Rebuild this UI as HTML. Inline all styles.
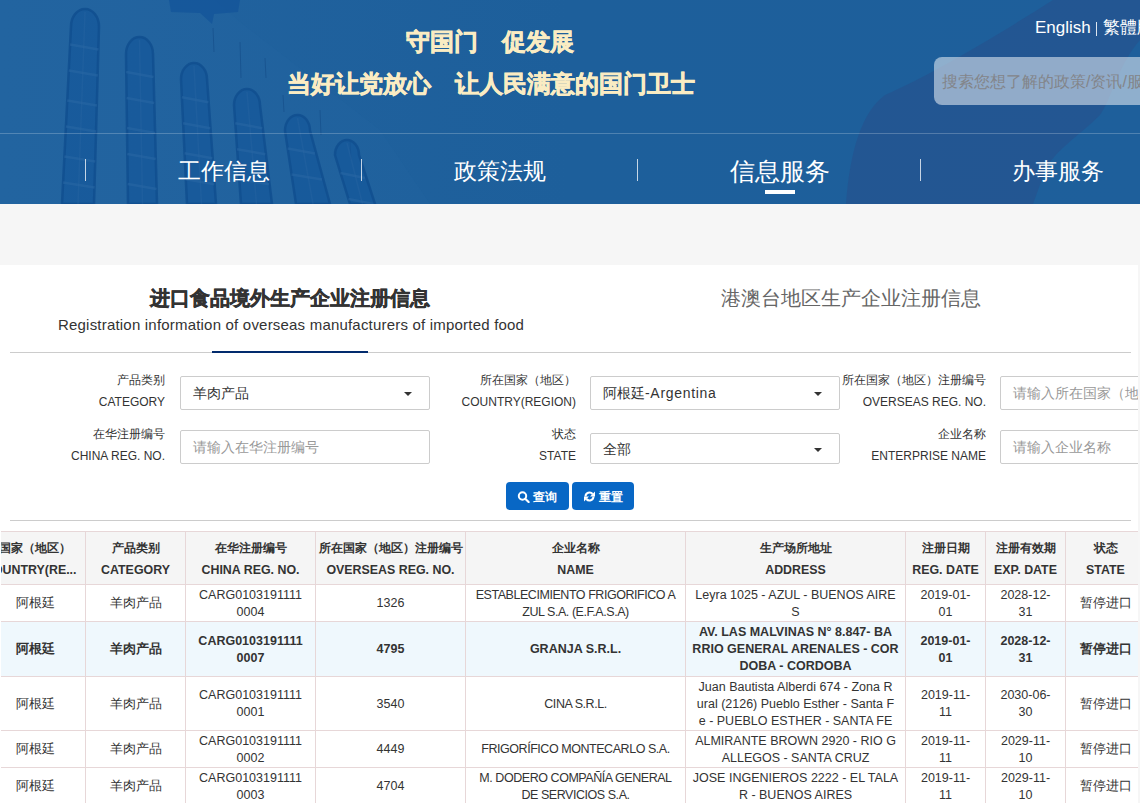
<!DOCTYPE html>
<html><head><meta charset="utf-8">
<style>
*{margin:0;padding:0;box-sizing:border-box}
html,body{width:1140px;height:803px;overflow:hidden;background:#f6f6f6;font-family:"Liberation Sans",sans-serif;color:#333}
.abs{position:absolute;white-space:nowrap}
#hdr{position:absolute;left:0;top:0;width:1140px;height:204px;background:#1e609b;overflow:hidden}
.slogan{color:#faecc3;font-weight:bold;font-size:24px;line-height:24px;-webkit-text-stroke:.6px #faecc3}
.navsep{position:absolute;top:159px;width:1px;height:22px;background:rgba(255,255,255,.75)}
.nav{position:absolute;top:158px;color:#fff;font-size:22.5px;line-height:28px;text-align:center;width:200px}
#clip{position:absolute;left:0;top:0;width:1138px;height:803px;overflow:hidden}
#main{position:absolute;left:0;top:265px;width:1138px;height:538px;background:#fff}
.lbl{position:absolute;text-align:right;font-size:12px;line-height:22px;color:#333;width:200px}
.box{position:absolute;width:250px;height:34px;border:1px solid #ccc;border-radius:2px;background:#fff;font-size:14px;line-height:32px;padding-left:12px;color:#333;white-space:nowrap;overflow:hidden}
.ph{color:#999}
.caret{position:absolute;right:17px;top:15px;width:0;height:0;border-left:4px solid transparent;border-right:4px solid transparent;border-top:4px solid #333}
.btn{position:absolute;top:482px;height:28px;background:#0867c5;border-radius:4px;color:#fff;font-weight:bold;font-size:12px;line-height:28px}
.btxt{top:1px;line-height:28px}
#tw{position:absolute;left:1px;top:531px;width:1137px;height:272px;overflow:hidden;background:#fff}
#tb{position:absolute;left:-15px;top:0;border-collapse:separate;border-spacing:0;table-layout:fixed;width:1160px;border-top:1px solid #e7d7d8;font-size:12.5px;color:#333}
#tb td,#tb th{border-right:1px solid #e7d7d8;border-bottom:1px solid #e7d7d8;text-align:center;vertical-align:middle;padding:1px 0 0;line-height:17px;white-space:nowrap;overflow:hidden}
#tb th{background:#f5f5f5;font-weight:bold;line-height:22px;height:53px;font-size:12.4px;padding:1px 0 0}
.c1h{position:relative;left:0;text-align:left}
#tb tr.hl td{background:#eff8fd;font-weight:bold}
#tb td:nth-child(5){letter-spacing:-.45px}
#tb tr.hl td:nth-child(5){letter-spacing:0}
</style></head><body>
<div id="hdr">
<svg class="abs" style="left:0;top:0" width="1140" height="204" viewBox="0 0 1140 204"><defs><linearGradient id="hg" x1="0" y1="0" x2="1" y2="0"><stop offset="0" stop-color="#22639f"/><stop offset=".5" stop-color="#1d5f9b"/><stop offset="1" stop-color="#1e5f9b"/></linearGradient></defs><rect width="1140" height="204" fill="url(#hg)"/><path d="M0,0 L215,0 L240,22 L380,130 L430,204 L0,204 Z" fill="#2a6aa5" fill-opacity=".15"/><path d="M169,0 L240,0 L238,12 L214,14 L212,24 L200,13 L171,12 Z" fill="#13549a" fill-opacity=".75"/><line x1="213" y1="28" x2="214" y2="52" stroke="#164f8a" stroke-opacity=".7" stroke-width="1"/><line x1="240" y1="42" x2="241" y2="78" stroke="#164f8a" stroke-opacity=".7" stroke-width="1"/><line x1="265" y1="58" x2="266" y2="78" stroke="#164f8a" stroke-opacity=".7" stroke-width="1"/><line x1="283" y1="95" x2="284" y2="112" stroke="#164f8a" stroke-opacity=".7" stroke-width="1"/><line x1="320" y1="110" x2="321" y2="135" stroke="#164f8a" stroke-opacity=".7" stroke-width="1"/><line x1="350" y1="140" x2="351" y2="160" stroke="#164f8a" stroke-opacity=".7" stroke-width="1"/><path d="M71,26.5 A14.0,17.5 0 0 1 99,26.5 L94,204 L62,204 Z" fill="#13559a" fill-opacity=".6" stroke="#114f8f" stroke-opacity=".85" stroke-width="2.5"/><line x1="70.1" y1="44.5" x2="98.5" y2="49.5" stroke="#2a68a4" stroke-opacity=".55" stroke-width="2.5"/><line x1="68.8" y1="70.5" x2="97.8" y2="75.5" stroke="#2a68a4" stroke-opacity=".55" stroke-width="2.5"/><line x1="67.2" y1="100.5" x2="96.9" y2="105.5" stroke="#2a68a4" stroke-opacity=".55" stroke-width="2.5"/><line x1="65.9" y1="126.5" x2="96.2" y2="131.5" stroke="#2a68a4" stroke-opacity=".55" stroke-width="2.5"/><line x1="64.4" y1="156.5" x2="95.3" y2="161.5" stroke="#2a68a4" stroke-opacity=".55" stroke-width="2.5"/><line x1="63.1" y1="182.5" x2="94.6" y2="187.5" stroke="#2a68a4" stroke-opacity=".55" stroke-width="2.5"/><line x1="85.0" y1="12" x2="78.0" y2="204" stroke="#2a68a4" stroke-opacity=".35" stroke-width="1.5"/><path d="M126,53.9 A13.5,16.9 0 0 1 153,53.9 L157,204 L128,204 Z" fill="#13559a" fill-opacity=".6" stroke="#114f8f" stroke-opacity=".85" stroke-width="2.5"/><line x1="126.2" y1="71.9" x2="153.5" y2="76.9" stroke="#2a68a4" stroke-opacity=".55" stroke-width="2.5"/><line x1="126.6" y1="97.9" x2="154.2" y2="102.9" stroke="#2a68a4" stroke-opacity=".55" stroke-width="2.5"/><line x1="127.0" y1="127.9" x2="155.0" y2="132.9" stroke="#2a68a4" stroke-opacity=".55" stroke-width="2.5"/><line x1="127.3" y1="153.9" x2="155.7" y2="158.9" stroke="#2a68a4" stroke-opacity=".55" stroke-width="2.5"/><line x1="127.7" y1="183.9" x2="156.5" y2="188.9" stroke="#2a68a4" stroke-opacity=".55" stroke-width="2.5"/><line x1="139.5" y1="40" x2="142.5" y2="204" stroke="#2a68a4" stroke-opacity=".35" stroke-width="1.5"/><path d="M181,79.2 A13.0,16.2 0 0 1 207,79.2 L216,204 L187,204 Z" fill="#13559a" fill-opacity=".6" stroke="#114f8f" stroke-opacity=".85" stroke-width="2.5"/><line x1="181.9" y1="97.2" x2="208.3" y2="102.2" stroke="#2a68a4" stroke-opacity=".55" stroke-width="2.5"/><line x1="183.1" y1="123.2" x2="210.2" y2="128.2" stroke="#2a68a4" stroke-opacity=".55" stroke-width="2.5"/><line x1="184.6" y1="153.2" x2="212.3" y2="158.2" stroke="#2a68a4" stroke-opacity=".55" stroke-width="2.5"/><line x1="185.8" y1="179.2" x2="214.2" y2="184.2" stroke="#2a68a4" stroke-opacity=".55" stroke-width="2.5"/><line x1="194.0" y1="66" x2="201.5" y2="204" stroke="#2a68a4" stroke-opacity=".35" stroke-width="1.5"/><path d="M234,105.2 A13.0,16.2 0 0 1 260,105.2 L272,204 L241,204 Z" fill="#13559a" fill-opacity=".6" stroke="#114f8f" stroke-opacity=".85" stroke-width="2.5"/><line x1="235.3" y1="123.2" x2="262.2" y2="128.2" stroke="#2a68a4" stroke-opacity=".55" stroke-width="2.5"/><line x1="237.1" y1="149.2" x2="265.3" y2="154.2" stroke="#2a68a4" stroke-opacity=".55" stroke-width="2.5"/><line x1="239.2" y1="179.2" x2="269.0" y2="184.2" stroke="#2a68a4" stroke-opacity=".55" stroke-width="2.5"/><line x1="247.0" y1="92" x2="256.5" y2="204" stroke="#2a68a4" stroke-opacity=".35" stroke-width="1.5"/><path d="M285,130.6 A12.5,15.6 0 0 1 310,130.6 L330,204 L296,204 Z" fill="#13559a" fill-opacity=".6" stroke="#114f8f" stroke-opacity=".85" stroke-width="2.5"/><line x1="287.7" y1="148.6" x2="314.9" y2="153.6" stroke="#2a68a4" stroke-opacity=".55" stroke-width="2.5"/><line x1="291.6" y1="174.6" x2="322.0" y2="179.6" stroke="#2a68a4" stroke-opacity=".55" stroke-width="2.5"/><line x1="297.5" y1="118" x2="313.0" y2="204" stroke="#2a68a4" stroke-opacity=".35" stroke-width="1.5"/><path d="M335,155.0 A12.0,15.0 0 0 1 359,155.0 L375,204 L350,204 Z" fill="#13559a" fill-opacity=".6" stroke="#114f8f" stroke-opacity=".85" stroke-width="2.5"/><line x1="340.5" y1="173.0" x2="364.9" y2="178.0" stroke="#2a68a4" stroke-opacity=".55" stroke-width="2.5"/><line x1="348.5" y1="199.0" x2="373.4" y2="204.0" stroke="#2a68a4" stroke-opacity=".55" stroke-width="2.5"/><line x1="347.0" y1="143" x2="362.5" y2="204" stroke="#2a68a4" stroke-opacity=".35" stroke-width="1.5"/><path d="M846,204 C850,150 862,112 885,95 C930,75 990,40 1053,0 L1140,0 L1140,40 C1118,65 1112,98 1100,115 C1080,135 1058,148 1046,168 L1033,204 Z" fill="#2b4a86" fill-opacity=".42"/></svg>
  <div class="abs slogan" style="left:406px;top:30px">守国门　促发展</div>
  <div class="abs slogan" style="left:287px;top:72px">当好让党放心　让人民满意的国门卫士</div>
  <div class="abs" style="left:1035px;top:17px;color:#fff;font-size:17px;line-height:22px">English</div><div class="abs" style="left:1096px;top:22px;width:1px;height:14px;background:rgba(255,255,255,.85)"></div><div class="abs" style="left:1103px;top:17px;color:#fff;font-size:17px;line-height:22px">繁體版</div>
  <div class="abs" style="left:934px;top:57px;width:260px;height:48px;border-radius:8px;background:rgba(255,255,255,.5);color:#838589;font-size:16px;line-height:50px;padding-left:8px">搜索您想了解的政策/资讯/服务</div>
  <div class="abs" style="left:0;top:133px;width:1140px;height:1px;background:rgba(255,255,255,.22)"></div>
  <div class="navsep" style="left:85px"></div>
  <div class="navsep" style="left:361px"></div>
  <div class="navsep" style="left:637px"></div>
  <div class="navsep" style="left:920px"></div>
  <div class="nav" style="left:124px">工作信息</div>
  <div class="nav" style="left:400px">政策法规</div>
  <div class="nav" style="left:680px;font-size:25px;top:157px">信息服务</div>
  <div class="nav" style="left:958px">办事服务</div>
  <div class="abs" style="left:765px;top:190px;width:30px;height:4px;background:#fff"></div>
</div>
<div id="clip">
<div id="main">
  <div class="abs" style="left:150px;top:20px;font-size:20px;font-weight:bold;line-height:26px;color:#333;-webkit-text-stroke:.45px #333">进口食品境外生产企业注册信息</div>
  <div class="abs" style="left:58px;top:50px;font-size:15px;line-height:20px;color:#333;letter-spacing:.2px">Registration information of overseas manufacturers of imported food</div>
  <div class="abs" style="left:721px;top:20px;font-size:20px;line-height:26px;color:#666">港澳台地区生产企业注册信息</div>
  <div class="abs" style="left:10px;top:87px;width:1121px;height:1px;background:#ccc"></div>
  <div class="abs" style="left:212px;top:86px;width:156px;height:2px;background:#022b6d"></div>
</div>
<div class="lbl" style="left:-35px;top:369px">产品类别<br>CATEGORY</div>
<div class="box" style="left:180px;top:376px">羊肉产品<i class="caret"></i></div>
<div class="lbl" style="left:376px;top:369px">所在国家（地区）<br>COUNTRY(REGION)</div>
<div class="box" style="left:590px;top:376px">阿根廷<span style="letter-spacing:.7px">-Argentina</span><i class="caret"></i></div>
<div class="lbl" style="left:786px;top:369px">所在国家（地区）注册编号<br>OVERSEAS REG. NO.</div>
<div class="box ph" style="left:1000px;top:376px">请输入所在国家（地区）注册编号</div>
<div class="lbl" style="left:-35px;top:423px">在华注册编号<br>CHINA REG. NO.</div>
<div class="box ph" style="left:180px;top:430px">请输入在华注册编号</div>
<div class="lbl" style="left:376px;top:423px">状态<br>STATE</div>
<div class="box" style="left:590px;top:433px;height:31px;line-height:31px">全部<i class="caret" style="top:14px"></i></div>
<div class="lbl" style="left:786px;top:423px">企业名称<br>ENTERPRISE NAME</div>
<div class="box ph" style="left:1000px;top:430px">请输入企业名称</div>
<div class="btn" style="left:506px;width:63px"><svg class="abs" style="left:11px;top:9px" width="13" height="12" viewBox="0 0 13 12"><circle cx="5.5" cy="5" r="3.7" fill="none" stroke="#fff" stroke-width="2"/><line x1="8.2" y1="7.8" x2="11.6" y2="11" stroke="#fff" stroke-width="2.2" stroke-linecap="round"/></svg><span class="abs btxt" style="left:27px">查询</span></div>
<div class="btn" style="left:572px;width:62px"><svg class="abs" style="left:12px;top:9px" width="11" height="11" viewBox="0 0 11 11"><path d="M1.5,5.5 A4,4 0 0 1 8.6,3" fill="none" stroke="#fff" stroke-width="2"/><path d="M11,0.6 V5.6 H6 Z" fill="#fff"/><path d="M9.5,5.5 A4,4 0 0 1 2.4,8" fill="none" stroke="#fff" stroke-width="2"/><path d="M0,10.4 V5.4 H5 Z" fill="#fff"/></svg><span class="abs btxt" style="left:27px">重置</span></div>
<div class="abs" style="left:10px;top:520px;width:1121px;height:1px;background:#ccc"></div>
<div id="tw"><table id="tb"><colgroup><col style="width:100px"><col style="width:100px"><col style="width:130px"><col style="width:150px"><col style="width:220px"><col style="width:220px"><col style="width:80px"><col style="width:80px"><col style="width:80px"></colgroup><tr><th><div class="c1h"><div style="margin-left:-11px">所在国家（地区）</div><div style="margin-left:-2px">COUNTRY(RE...</div></div></th><th>产品类别<br>CATEGORY</th><th>在华注册编号<br>CHINA REG. NO.</th><th>所在国家（地区）注册编号<br>OVERSEAS REG. NO.</th><th>企业名称<br>NAME</th><th>生产场所地址<br>ADDRESS</th><th>注册日期<br>REG. DATE</th><th>注册有效期<br>EXP. DATE</th><th>状态<br>STATE</th></tr>
<tr style="height:37px"><td>阿根廷</td><td>羊肉产品</td><td>CARG0103191111<br>0004</td><td>1326</td><td>ESTABLECIMIENTO FRIGORIFICO A<br>ZUL S.A. (E.F.A.S.A)</td><td>Leyra 1025 - AZUL - BUENOS AIRE<br>S</td><td>2019-01-<br>01</td><td>2028-12-<br>31</td><td>暂停进口</td></tr>
<tr class="hl" style="height:55px"><td>阿根廷</td><td>羊肉产品</td><td>CARG0103191111<br>0007</td><td>4795</td><td>GRANJA S.R.L.</td><td>AV. LAS MALVINAS N° 8.847- BA<br>RRIO GENERAL ARENALES - COR<br>DOBA - CORDOBA</td><td>2019-01-<br>01</td><td>2028-12-<br>31</td><td>暂停进口</td></tr>
<tr style="height:54px"><td>阿根廷</td><td>羊肉产品</td><td>CARG0103191111<br>0001</td><td>3540</td><td>CINA S.R.L.</td><td>Juan Bautista Alberdi 674 - Zona R<br>ural (2126) Pueblo Esther - Santa F<br>e - PUEBLO ESTHER - SANTA FE</td><td>2019-11-<br>11</td><td>2030-06-<br>30</td><td>暂停进口</td></tr>
<tr style="height:37px"><td>阿根廷</td><td>羊肉产品</td><td>CARG0103191111<br>0002</td><td>4449</td><td>FRIGORÍFICO MONTECARLO S.A.</td><td>ALMIRANTE BROWN 2920 - RIO G<br>ALLEGOS - SANTA CRUZ</td><td>2019-11-<br>11</td><td>2029-11-<br>10</td><td>暂停进口</td></tr>
<tr style="height:37px"><td>阿根廷</td><td>羊肉产品</td><td>CARG0103191111<br>0003</td><td>4704</td><td>M. DODERO COMPAÑÍA GENERAL<br>DE SERVICIOS S.A.</td><td>JOSE INGENIEROS 2222 - EL TALA<br>R - BUENOS AIRES</td><td>2019-11-<br>11</td><td>2029-11-<br>10</td><td>暂停进口</td></tr></table></div>
</div>
</body></html>
